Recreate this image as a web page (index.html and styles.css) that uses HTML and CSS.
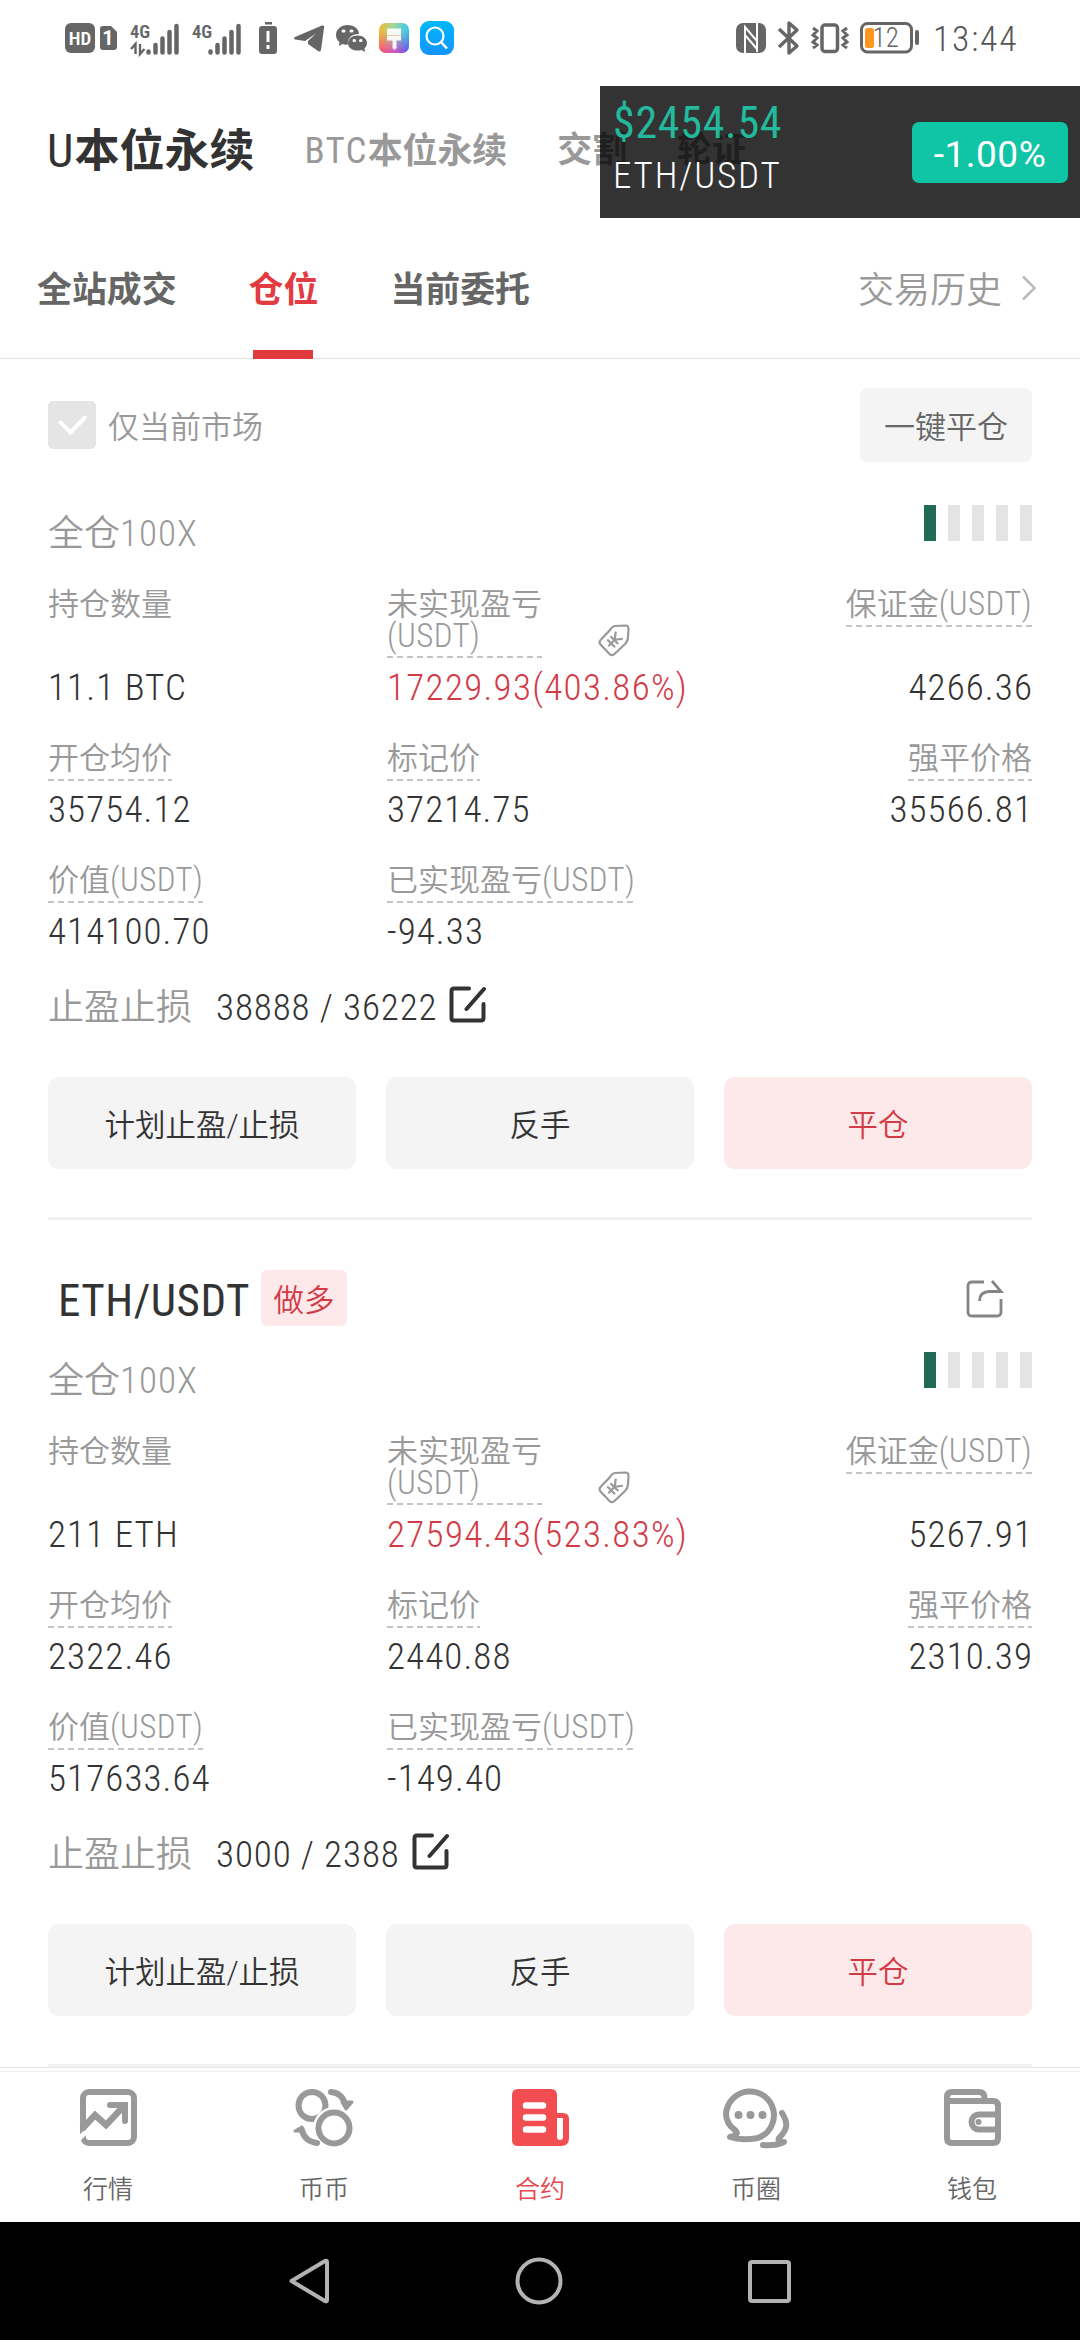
FILE: index.html
```html
<!DOCTYPE html>
<html lang="zh-CN">
<head>
<meta charset="utf-8">
<title>合约仓位</title>
<link rel="stylesheet" href="styles.css">
</head>
<body>
<svg class="defs" aria-hidden="true">
  <symbol id="tag" viewBox="0 0 32 33">
    <path d="M17 2L28 1.5Q30.5 1.5 30.5 5L30 13Q30 17 27 20L17 29.5Q14 32.500 11.500 30L2.500 20.500Q.5 18 3 15.500L12 6Q14 2.500 17 2Z" fill="none" stroke="#999" stroke-width="2.2"/>
    <path transform="rotate(45 16 16.500)" d="M11 9l5 6.500 5-6.500M16 15.500v9M10.500 16h11M10.500 20.500h11" fill="none" stroke="#999" stroke-width="2.200"/>
  </symbol>
  <symbol id="edit" viewBox="0 0 37 37">
    <path d="M20 2.500H5Q2.500 2.500 2.500 5V32Q2.500 34.500 5 34.500H32Q34.500 34.500 34.500 32V18M17.500 23L35 3" fill="none" stroke="#333" stroke-width="4" stroke-linecap="round"/>
  </symbol>
</svg>
<div class="screen">
  <header class="status">
    <div class="status-side">
      <svg width="30" height="30"><rect width="30" height="30" rx="6" fill="#666"/><text x="15" y="21.500" text-anchor="middle" class="ic-hd">HD</text></svg>
      <svg class="m5" width="17" height="24"><path d="M3 0H11L17 6V21Q17 24 14 24H3Q0 24 0 21V3Q0 0 3 0Z" fill="#666"/><text x="8" y="19" text-anchor="middle" class="ic-sim">1</text></svg>
      <svg class="m13" width="50" height="34" viewBox="0 0 50 34"><text x="0" y="16.500" class="ic-4g">4G</text><path d="M5.500 33V23L1 28M10 23V33L14.500 28" fill="none" stroke="#666" stroke-width="2.400"/><path d="M18.500 30.500v1M25.500 24v7.500M32.500 17.500v14M39.500 11v20.500M46.500 5v26.500" stroke="#666" stroke-width="4.500" stroke-linecap="round"/></svg>
      <svg class="m12" width="50" height="34" viewBox="0 0 50 34"><text x="0" y="16.500" class="ic-4g">4G</text><path d="M18.500 30.500v1M25.500 24v7.500M32.500 17.500v14M39.500 11v20.500M46.500 5v26.500" stroke="#666" stroke-width="4.500" stroke-linecap="round"/></svg>
      <svg class="m17" width="18" height="32"><path d="M6 0h7v2.500H6zM3 4H15Q18 4 18 7V29Q18 32 15 32H3Q0 32 0 29V7Q0 4 3 4Z" fill="#666"/><path d="M9 9v11M9 23v4" stroke="#fff" stroke-width="3"/></svg>
      <svg class="m17" width="30" height="27"><path d="M1 12L28 .5Q31 0 30 3L27 25Q26 27.500 24 26L14 19V16L22 8.500 11 16 1 14.500Q-1 13.500 1 12Z" fill="#666"/></svg>
      <svg class="m12" width="32" height="28"><path d="M11.500 1C18 1 23 5 23 10 15 10 11 15 12 20.500Q9 21 6.500 20L3 22 3.500 18Q0 15.500 0 11C0 5.500 5 1 11.500 1Z" fill="#666"/><path d="M21.500 11.500C27 11.500 31 15 31 19Q31 22 28.500 24.500L29 28 25.500 26C19 28 12 25 12 19 12 15 16 11.500 21.500 11.500Z" fill="#666"/><path d="M7 7h1M15 7h1M18 16.500h.5M24.500 16.500h.5" stroke="#fff" stroke-width="3" stroke-linecap="round"/></svg>
      <svg class="m11" width="30" height="30"><defs><linearGradient id="g1"><stop offset="0" stop-color="#f7b733"/><stop offset=".5" stop-color="#9ed8a0"/><stop offset="1" stop-color="#35c4f3"/></linearGradient><linearGradient id="g2"><stop offset="0" stop-color="#ff4b6c"/><stop offset=".5" stop-color="#d94fc0"/><stop offset="1" stop-color="#5a4cf0"/></linearGradient><linearGradient id="gm" x2="0" y2="1"><stop offset=".3" stop-color="#fff" stop-opacity="0"/><stop offset="1" stop-color="#fff"/></linearGradient><mask id="mk"><rect width="30" height="30" fill="url(#gm)"/></mask></defs><rect width="30" height="30" rx="7" fill="url(#g1)"/><rect width="30" height="30" rx="7" fill="url(#g2)" mask="url(#mk)"/><path d="M8 5.500H22V17.500H17.500V25Q15.500 28 13.500 25V17.500H8Z" fill="#fff" fill-opacity=".9"/><path d="M8 12.500H22" stroke="#f8c9a8"/></svg>
      <svg class="m11" width="34" height="34"><defs><linearGradient id="g3" x2="0" y2="1"><stop stop-color="#00b8fc"/><stop offset="1" stop-color="#1593fb"/></linearGradient></defs><rect width="34" height="34" rx="9" fill="url(#g3)"/><circle cx="15" cy="15" r="8.500" fill="none" stroke="#fff" stroke-width="2.200"/><path d="M21 21l6 6.500" stroke="#fff" stroke-width="2.500"/></svg>
    </div>
    <div class="status-side status-right">
      <svg width="30" height="30"><rect width="30" height="30" rx="7" fill="#666"/><path d="M9 30V4L21 18V29M21 0V26L9 12" fill="none" stroke="#fff" stroke-width="2"/></svg>
      <svg class="m12" width="21" height="34"><path d="M1 8L19 25 11 32V2L19 9 1 26" fill="none" stroke="#666" stroke-width="3.400" stroke-linejoin="round"/></svg>
      <svg class="m12" width="38" height="30"><rect x="11" y="2" width="15.500" height="26.500" rx="3" fill="none" stroke="#666" stroke-width="3.500"/><path d="M2 5l4 3-4 4 4 3-4 4 4 3-4 3M36 5l-4 3 4 4-4 3 4 4-4 3 4 3" fill="none" stroke="#666" stroke-width="3"/></svg>
      <svg class="m11" width="60" height="32"><rect x="1.500" y="1.500" width="50" height="28.500" rx="6" fill="none" stroke="#666" stroke-width="3"/><rect x="5" y="6" width="9" height="20" rx="2.500" fill="#ff961f"/><path d="M57 10v11" stroke="#666" stroke-width="4" stroke-linecap="round"/><text x="12.500" y="25" class="ic-pct">12</text></svg>
      <span class="clock">13:44</span>
    </div>
  </header>

  <nav class="markets">
    <span class="market on"><span class="lat">U</span>本位永续</span>
    <span class="market"><span class="lat">BTC</span>本位永续</span>
    <span class="market">交割</span>
    <span class="market">轮证</span>
  </nav>

  <nav class="tabs">
    <span class="tab">全站成交</span>
    <span class="tab on">仓位</span>
    <span class="tab">当前委托</span>
    <span class="history">交易历史</span>
    <svg width="16" height="26"><path d="M2 1.500L13.500 13 2 24.500" fill="none" stroke="#bbb" stroke-width="2.500"/></svg>
  </nav>

  <main class="content">
    <div class="filter">
      <svg width="48" height="48"><rect width="48" height="48" rx="5" fill="#e5e5e5"/><path d="M12.500 21.500L22.500 31.500 37 16.500" fill="none" stroke="#fff" stroke-width="4" stroke-linecap="round"/></svg>
      <span class="filter-text">仅当前市场</span>
      <span class="close-all">一键平仓</span>
    </div>

    <section class="position">
      <div class="meta"><span class="lever">全仓<span class="lat">100X</span></span><span class="risk"><i class="bar full"></i><i class="bar"></i><i class="bar"></i><i class="bar"></i><i class="bar"></i></span></div>
      <div class="grid">
        <div class="cell"><span class="label plain">持仓数量</span><span class="value">11.1 BTC</span></div>
        <div class="cell"><span class="pnl"><span class="label two">未实现盈亏<br><span class="lat">(USDT)</span></span><svg class="tagicon" width="32" height="33"><use href="#tag"/></svg></span><span class="value red">17229.93(403.86%)</span></div>
        <div class="cell end"><span class="label">保证金<span class="lat">(USDT)</span></span><span class="value">4266.36</span></div>
        <div class="cell"><span class="label">开仓均价</span><span class="value">35754.12</span></div>
        <div class="cell"><span class="label">标记价</span><span class="value">37214.75</span></div>
        <div class="cell end"><span class="label">强平价格</span><span class="value">35566.81</span></div>
        <div class="cell"><span class="label">价值<span class="lat">(USDT)</span></span><span class="value">414100.70</span></div>
        <div class="cell"><span class="label">已实现盈亏<span class="lat">(USDT)</span></span><span class="value">-94.33</span></div>
      </div>
      <div class="stop"><span class="stop-label">止盈止损</span><span class="stop-value">38888 / 36222</span><svg width="37" height="37"><use href="#edit"/></svg></div>
      <div class="actions"><span class="btn">计划止盈/止损</span><span class="btn">反手</span><span class="btn danger">平仓</span></div>
    </section>

    <section class="position">
      <div class="head"><span class="pair">ETH/USDT</span><span class="side">做多</span><svg class="share" width="40" height="40"><path d="M19 3H7Q3 3 3 7V33Q3 37 7 37H32Q36 37 36 33V20M27 2L36 12.500H24Q14.500 13 14.500 22" fill="none" stroke="#858585" stroke-width="2.800"/></svg></div>
      <div class="meta"><span class="lever">全仓<span class="lat">100X</span></span><span class="risk"><i class="bar full"></i><i class="bar"></i><i class="bar"></i><i class="bar"></i><i class="bar"></i></span></div>
      <div class="grid">
        <div class="cell"><span class="label plain">持仓数量</span><span class="value">211 ETH</span></div>
        <div class="cell"><span class="pnl"><span class="label two">未实现盈亏<br><span class="lat">(USDT)</span></span><svg class="tagicon" width="32" height="33"><use href="#tag"/></svg></span><span class="value red">27594.43(523.83%)</span></div>
        <div class="cell end"><span class="label">保证金<span class="lat">(USDT)</span></span><span class="value">5267.91</span></div>
        <div class="cell"><span class="label">开仓均价</span><span class="value">2322.46</span></div>
        <div class="cell"><span class="label">标记价</span><span class="value">2440.88</span></div>
        <div class="cell end"><span class="label">强平价格</span><span class="value">2310.39</span></div>
        <div class="cell"><span class="label">价值<span class="lat">(USDT)</span></span><span class="value">517633.64</span></div>
        <div class="cell"><span class="label">已实现盈亏<span class="lat">(USDT)</span></span><span class="value">-149.40</span></div>
      </div>
      <div class="stop"><span class="stop-label">止盈止损</span><span class="stop-value">3000 / 2388</span><svg width="37" height="37"><use href="#edit"/></svg></div>
      <div class="actions"><span class="btn">计划止盈/止损</span><span class="btn">反手</span><span class="btn danger">平仓</span></div>
    </section>
  </main>

  <nav class="tabbar">
    <span class="item"><svg width="57" height="57"><rect x="3" y="3" width="51" height="51" rx="6" fill="none" stroke="#999" stroke-width="6"/><path d="M-2 50.500L9 40" stroke="#fff" stroke-width="5"/><path d="M2 40L15 26 26 36 43 18" fill="none" stroke="#999" stroke-width="6.500"/><path d="M30 16H45V32" fill="none" stroke="#999" stroke-width="6" stroke-linecap="round"/></svg>行情</span>
    <span class="item"><svg width="60" height="57"><circle cx="18" cy="16.500" r="13.500" fill="none" stroke="#999" stroke-width="6"/><circle cx="40" cy="39" r="21" fill="#fff"/><circle cx="40" cy="39" r="15.500" fill="none" stroke="#999" stroke-width="6"/><path d="M37 3Q48 4 51 15M23 54Q10 52 8 41" fill="none" stroke="#999" stroke-width="6" stroke-linecap="round"/><path d="M48 13L58 13 52 20ZM1 42L8 38 8 42Z" fill="#999" stroke="#999" stroke-width="3" stroke-linejoin="round"/></svg>币币</span>
    <span class="item on"><svg width="57" height="57"><path d="M6 0H39Q45 0 45 6V24H51Q57 24 57 30V49Q57 57 49 57H6Q0 57 0 51V6Q0 0 6 0Z" fill="#f24e51"/><path d="M14 16.500H31M14 28.500H31M14 40.500H31" stroke="#fff" stroke-width="6.500" stroke-linecap="round"/><path d="M48 32V48" stroke="#fff" stroke-width="6" stroke-linecap="round"/><path d="M45 29h6v6h-6z" fill="#fff"/></svg>合约</span>
    <span class="item"><svg class="chat" width="67" height="62"><path d="M7 50Q16 48 13 44C6 39 3 34 3 27A24 24 0 1 1 35 51Q18 54 7 50Z" fill="none" stroke="#999" stroke-width="6" stroke-linejoin="round"/><path d="M59 26C66 37 64 43 56 51Q54 55 61 55 53 59 40 58" fill="none" stroke="#999" stroke-width="6" stroke-linecap="round" stroke-linejoin="round"/><path d="M15.500 28h0M27.500 28h0M39.500 28h0" stroke="#999" stroke-width="8" stroke-linecap="round"/></svg>币圈</span>
    <span class="item"><svg width="57" height="57"><path d="M3 12V8Q3 3 8 3H35Q40.500 3 40.500 9V12" fill="none" stroke="#999" stroke-width="6"/><path d="M3 12H49Q54 12 54 17V49Q54 54 49 54H8Q3 54 3 49ZM54 25.500H35A7.500 7.500 0 0 0 35 40.500H54" fill="none" stroke="#999" stroke-width="6"/><circle cx="34.500" cy="33" r="3" fill="#999"/></svg>钱包</span>
  </nav>

  <footer class="sysnav">
    <svg width="40" height="46"><path d="M2.500 23L36 3Q38 2 38 4V42Q38 44 36 43Z" fill="none" stroke="#b3b3b3" stroke-width="4" stroke-linejoin="round"/></svg>
    <svg width="48" height="48"><circle cx="24" cy="24" r="21.500" fill="none" stroke="#b3b3b3" stroke-width="4"/></svg>
    <svg width="43" height="43"><rect x="2" y="2" width="39" height="39" rx="2" fill="none" stroke="#b3b3b3" stroke-width="4"/></svg>
  </footer>

  <aside class="ticker">
    <div class="ticker-text"><div class="ticker-price">$2454.54</div><div class="ticker-pair">ETH/USDT</div></div>
    <span class="ticker-change">-1.00%</span>
  </aside>
</div>
</body>
</html>
```
FILE: styles.css
```css
* { box-sizing: border-box; }
body {
  margin: 0;
  background: #fff;
  color: #333;
  font-family: Roboto, "Noto Sans CJK SC", sans-serif;
  font-weight: 350;
}
svg { display: block; flex: none; overflow: visible; }
.defs { width: 0; height: 0; position: absolute; }
.lat { font-stretch: 82%; }

.screen {
  position: relative;
  width: 1080px;
  height: 2340px;
  overflow: hidden;
  display: flex;
  flex-direction: column;
}

/* Status bar */
.status {
  height: 76px;
  padding: 0 65px;
  display: flex;
  align-items: center;
  justify-content: space-between;
}
.status-side { display: flex; align-items: center; }
.m5 { margin-left: 5px; }
.m11 { margin-left: 11px; }
.m12 { margin-left: 12px; }
.m13 { margin-left: 13px; }
.m17 { margin-left: 17px; }
.ic-hd { font-size: 19px; font-weight: 600; fill: #fff; font-stretch: 85%; }
.ic-sim { font-size: 20px; font-weight: 700; fill: #fff; }
.ic-4g { font-size: 18.500px; font-weight: 600; fill: #666; font-stretch: 75%; }
.ic-pct { font-size: 27px; font-weight: 300; fill: #666; font-stretch: 85%; }
.clock {
  width: 82px;
  margin: 2px 0 0 13px;
  font-size: 35.500px;
  font-weight: 320;
  font-stretch: 82%;
  letter-spacing: 1.800px;
  color: #555;
}

/* Market switcher */
.markets {
  height: 150px;
  padding: 0 47px;
  display: flex;
  align-items: center;
  gap: 50px;
  white-space: nowrap;
}
.market { font-size: 34.900px; line-height: 50px; font-weight: 600; color: #999; }
.market .lat { font-size: 37px; font-weight: 400; letter-spacing: 1.200px; }
.market.on { font-size: 45px; color: #333; }
.market.on .lat { font-size: 47px; font-weight: 430; }

/* Section tabs */
.tabs {
  height: 133px;
  padding: 0 43px 0 37px;
  display: flex;
  align-items: center;
  border-bottom: 1px solid #e0e0e0;
}
.tab {
  height: 133px;
  line-height: 130px;
  margin-right: 72px;
  font-size: 34.900px;
  font-weight: 600;
  color: #666;
  white-space: nowrap;
}
.tab.on {
  color: #e23b41;
  background: linear-gradient(#e23a3f, #e23a3f) center bottom / 60px 9px no-repeat;
}
.history { margin: -2px 19px 0 auto; font-size: 36px; line-height: 50px; color: #999; }
.history + svg { margin-top: -8px; }

/* Positions */
.content {
  height: 1708px;
  overflow: hidden;
  padding: 0 48px;
}
.filter {
  height: 146px;
  padding-top: 29px;
  display: flex;
  align-items: flex-start;
}
.filter svg { margin-top: 13px; }
.filter-text { margin: 20px 0 0 12px; font-size: 31px; line-height: 40px; color: #999; }
.close-all {
  margin-left: auto;
  width: 172px;
  height: 74px;
  line-height: 80px;
  border-radius: 8px;
  background: #f4f4f4;
  color: #666;
  font-size: 31px;
  text-align: center;
}
.position { border-bottom: 3px solid #f2f2f2; padding-bottom: 48px; }
.head {
  height: 132px;
  padding: 50px 27px 0 10px;
  display: flex;
  align-items: flex-start;
}
.pair { font-size: 45px; line-height: 61px; font-weight: 440; font-stretch: 82%; letter-spacing: .5px; }
.side {
  margin-left: 11px;
  width: 86px;
  height: 56px;
  line-height: 61px;
  border-radius: 6px;
  background: #fde9ea;
  color: #d23b46;
  font-size: 30.500px;
  text-align: center;
}
.share { margin: 9px 0 0 auto; }
.meta { height: 56px; display: flex; justify-content: space-between; }
.lever { font-size: 36px; line-height: 58px; color: #999; }
.lever .lat { font-size: 37px; letter-spacing: 1px; }
.risk { display: flex; gap: 12px; }
.bar { width: 12px; height: 36px; background: #e4e4e4; }
.bar.full { background: #206a56; }
.grid {
  margin-top: 28px;
  display: grid;
  grid-template-columns: 339px 339px 306px;
  grid-template-rows: 154px 122px 122px;
}
.cell {
  display: flex;
  flex-direction: column;
  align-items: flex-start;
  justify-content: space-between;
  padding-bottom: 39px;
}
.cell.end { align-items: flex-end; }
.label {
  font-size: 31px;
  line-height: 32px;
  padding-bottom: 6px;
  color: #999;
  white-space: nowrap;
  background: repeating-linear-gradient(90deg, #c4c4c4 0 6px, transparent 6px 10px) left bottom / 100% 2px no-repeat;
}
.label.plain { background: none; }
.label.two { padding-bottom: 5px; }
.label .lat { font-size: 33px; line-height: 30px; letter-spacing: .4px; }
.pnl { display: flex; align-items: flex-end; gap: 56px; }
.tagicon { margin-bottom: 1px; }
.value {
  font-size: 37px;
  line-height: 32px;
  font-stretch: 82%;
  letter-spacing: 1.100px;
  margin-right: -1px;
  white-space: nowrap;
}
.red { color: #d23b46; letter-spacing: 1.300px; }
.stop { height: 40px; display: flex; align-items: center; }
.stop-label { font-size: 36px; line-height: 40px; margin-top: 1px; color: #999; }
.stop-value {
  margin: 1px 12px 0 24px;
  font-size: 37px;
  font-stretch: 82%;
  letter-spacing: .9px;
  line-height: 40px;
}
.stop svg { margin-top: -6px; }
.actions {
  margin-top: 50px;
  display: grid;
  grid-template-columns: repeat(3, 308px);
  gap: 30px;
}
.btn {
  height: 92px;
  line-height: 98px;
  border-radius: 11px;
  background: #f4f4f4;
  font-size: 30.500px;
  text-align: center;
}
.btn.danger { background: #fde9ea; color: #d23b46; }

/* App tab bar */
.tabbar {
  height: 155px;
  border-top: 1px solid #e8e8e8;
  display: grid;
  grid-template-columns: repeat(5, 1fr);
  background: linear-gradient(#eee, #eee) 0 3px / 100% 1px no-repeat #fff;
}
.item {
  padding-top: 21px;
  display: flex;
  flex-direction: column;
  align-items: center;
  gap: 26px;
  font-size: 25px;
  line-height: 36px;
  color: #666;
}
.item.on { color: #e6484e; }
.chat { margin: -2px 0 -3px; }

/* System navigation */
.sysnav {
  flex: 1;
  padding: 0 289px 0 289px;
  display: flex;
  align-items: center;
  justify-content: space-between;
  background: #000;
}

/* Floating price ticker */
.ticker {
  position: absolute;
  left: 600px;
  top: 86px;
  width: 480px;
  height: 132px;
  padding: 0 12px 0 13px;
  display: flex;
  align-items: center;
  justify-content: space-between;
  background: rgba(0, 0, 0, .8);
}
.ticker-text { margin-top: -6px; }
.ticker-price {
  font-size: 44px;
  line-height: 54px;
  font-weight: 450;
  font-stretch: 86%;
  letter-spacing: .7px;
  color: #22b99c;
}
.ticker-pair {
  font-size: 37px;
  line-height: 52px;
  font-stretch: 86%;
  letter-spacing: 1.800px;
  color: #fff;
}
.ticker-change {
  width: 156px;
  height: 61px;
  line-height: 65px;
  border-radius: 7px;
  background: #10c4a6;
  color: #fff;
  font-size: 37px;
  font-weight: 400;
  letter-spacing: .5px;
  text-align: center;
}
```
